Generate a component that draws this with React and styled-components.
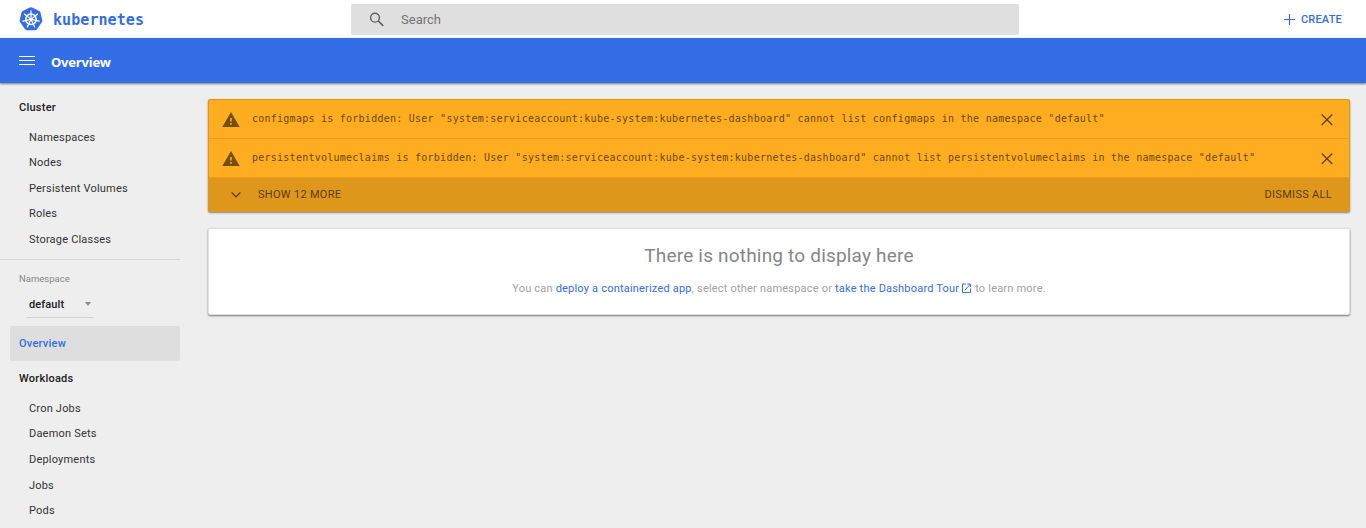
import React from "react";
import styled, { createGlobalStyle } from "styled-components";

const Global = createGlobalStyle`
  * { box-sizing: border-box; }
  body { margin: 0; background: #eee; font-family: Roboto, sans-serif; overflow: hidden; }
`;

const Page = styled.div`
  height: 528px;
  overflow: hidden;
  display: flex;
  flex-direction: column;
`;

const TopBar = styled.header`
  height: 38px;
  flex: none;
  display: flex;
  align-items: center;
  background: #fff;
`;

const Brand = styled.div`
  width: 351px;
  padding-left: 19px;
  display: flex;
  align-items: center;
  color: #326de6;
`;

const BrandName = styled.span`
  margin: 1px 0 0 10px;
  font: 700 15px/20px "DejaVu Sans Mono", monospace;
  letter-spacing: 0.07px;
`;

const SearchBox = styled.div`
  width: 668px;
  height: 31px;
  margin-top: 1px;
  padding-left: 18px;
  display: flex;
  align-items: center;
  gap: 16px;
  background: #dfdfdf;
  border-radius: 2px;
  color: #757575;
  font-size: 13px;
  letter-spacing: 0.02px;
`;

const CreateButton = styled.div`
  margin-left: auto;
  padding-right: 24px;
  display: flex;
  align-items: center;
  gap: 6px;
  color: #326de6;
  font-size: 11px;
  font-weight: 500;
  letter-spacing: 0.2px;
`;

const ActionBar = styled.div`
  height: 45px;
  flex: none;
  padding: 3px 0 0 19px;
  display: flex;
  align-items: center;
  gap: 16px;
  position: relative;
  background: #326de6;
  box-shadow: 0 1px 2px rgba(0, 0, 0, 0.5);
`;

const PageTitle = styled.h1`
  margin: 0;
  color: #fff;
  font: 700 13px/20px "Noto Sans", sans-serif;
  letter-spacing: -0.2px;
`;

const Body = styled.div`
  flex: 1;
  display: flex;
  min-height: 0;
`;

const Sidebar = styled.nav`
  width: 208px;
  padding-top: 7px;
  flex: none;
  color: #333;
  font-size: 11px;
`;

const NavHeading = styled.div`
  height: 35px;
  width: 170px;
  margin-left: 10px;
  padding-left: 9px;
  line-height: 35px;
  font-weight: 500;
  letter-spacing: 0.25px;
  border-radius: 2px;
  color: ${(p) => (p.$active ? "#326de6" : "#212121")};
  background: ${(p) => (p.$active ? "#dedede" : "transparent")};
`;

const NavList = styled.div`
  margin-top: -0.2px;
`;

const NavItem = styled.div`
  height: ${(p) => p.$height}px;
  padding-left: 29px;
  line-height: 25.5px;
  letter-spacing: 0.2px;
`;

const Divider = styled.div`
  width: 180px;
  height: 1px;
  margin-top: 6.7px;
  background: #d5d5d5;
`;

const FieldLabel = styled.div`
  padding: 13px 0 0 19px;
  font-size: 9.5px;
  line-height: 12px;
  color: #888;
`;

const NamespaceSelect = styled.div`
  width: 66px;
  height: 27px;
  margin: 6px 0 8px 27px;
  padding: 0 2px;
  display: flex;
  align-items: center;
  justify-content: space-between;
  border-bottom: 1px solid #d2d2d2;
  color: #212121;
  font-weight: 500;
  letter-spacing: 0.1px;
`;

const Caret = styled.i`
  border: 3.5px solid transparent;
  border-top: 4px solid #8b8b8b;
  border-bottom: 0;
`;

const Main = styled.main`
  flex: 1;
  padding: 16px 16px 0 0;
`;

const Alerts = styled.section`
  height: 113px;
  border: 1px solid #df971b;
  border-radius: 2px;
  background: #ffad20;
  box-shadow: 0 1px 2px rgba(0, 0, 0, 0.45);
  color: #6a480d;
`;

const AlertRow = styled.div`
  height: 39px;
  padding: 1px 16px 0 13px;
  display: flex;
  align-items: center;
  border-bottom: 1px solid #e99d1c;
`;

const AlertText = styled.span`
  flex: 1;
  margin: 0 0 2px 12px;
  font: 10px/16px "DejaVu Sans Mono", monospace;
  letter-spacing: 0.25px;
  white-space: pre;
`;

const AlertFooter = styled.div`
  height: 33px;
  padding: 0 17px 0 22px;
  display: flex;
  align-items: center;
  background: #df971b;
  color: #593c0b;
  font-size: 11px;
  letter-spacing: 0.3px;
`;

const FooterAction = styled.span`
  margin-left: ${(p) => (p.$end ? "auto" : "17px")};
`;

const EmptyCard = styled.section`
  height: 87px;
  margin-top: 16px;
  padding-top: 14px;
  border: 1px solid #e0e0e0;
  border-radius: 2px;
  background: #fff;
  text-align: center;
  box-shadow: 0 1px 2px rgba(0, 0, 0, 0.5);
`;

const EmptyTitle = styled.h2`
  margin: 0;
  color: #868686;
  font-size: 19px;
  font-weight: 400;
  line-height: 25px;
  letter-spacing: 0.19px;
`;

const EmptyText = styled.p`
  margin: 13px 0 0;
  color: #a1a1a1;
  font-size: 11px;
  line-height: 16px;
  letter-spacing: 0.2px;
`;

const Link = styled.a`
  color: #326de6;
  svg { vertical-align: -1px; margin: 0 1px 0 3px; }
`;

const Logo = () => (
  <svg width="24" height="24" viewBox="0 0 24 24" fill="none">
    <path d="M12 .3Q12.6.3 13.2.6L20.3 4Q21.3 4.5 21.5 5.5L23.3 13.4Q23.5 14.4 22.8 15.2L17.8 22.4Q17.1 23.2 16 23.2H8Q6.9 23.2 6.2 22.4L1.2 15.2Q.5 14.4.7 13.4L2.5 5.5Q2.7 4.5 3.7 4L10.8.6Q11.4.3 12 .3Z" fill="#326de6" />
    <circle cx="12" cy="12.3" r="5.2" stroke="#fff" strokeWidth="1.5" />
    {[0, 1, 2, 3, 4, 5, 6].map((n) => (
      <g key={n} transform={`rotate(${(n * 360) / 7} 12 12.3)`}>
        <path d="M12 11V3.9" stroke="#fff" strokeWidth="1.25" strokeLinecap="round" />
      </g>
    ))}
    <circle cx="12" cy="12.3" r="1.4" fill="#fff" />
  </svg>
);

const SearchIcon = () => (
  <svg width="16" height="16" viewBox="0 0 16 16" fill="none" stroke="#616161" strokeWidth="1.4">
    <circle cx="6" cy="5.7" r="4.4" />
    <path d="M9.3 9 14.2 13.9" strokeWidth="1.7" />
  </svg>
);

const PlusIcon = () => (
  <svg width="11" height="11" viewBox="0 0 11 11" stroke="#326de6" strokeWidth="1.2">
    <path d="M5.5 0V11M0 5.5H11" />
  </svg>
);

const MenuIcon = () => (
  <svg width="16" height="12" viewBox="0 0 16 12" fill="#fff">
    <path d="M0 0H16V1H0ZM0 4H16V5H0ZM0 8H16V9H0Z" />
  </svg>
);

const WarningIcon = () => (
  <svg width="18" height="16" viewBox="0 0 18 16">
    <path d="M9 0 17.7 15H.3ZM8.2 6V9.5H9.8V6ZM8.2 11V12.7H9.8V11Z" fill="#74500f" fillRule="evenodd" />
  </svg>
);

const CloseIcon = () => (
  <svg width="12" height="12" viewBox="0 0 12 12" stroke="#62430c" strokeWidth="1.35">
    <path d="M.7.5 11.3 11.1M11.3.5.7 11.1" />
  </svg>
);

const ChevronIcon = () => (
  <svg width="10" height="10" viewBox="0 0 10 10" fill="none" stroke="#593c0b" strokeWidth="1.3">
    <path d="M.6 2.5 5 6.9 9.4 2.5" />
  </svg>
);

const ExternalIcon = () => (
  <svg width="9" height="10" viewBox="0 0 9 10" fill="none" stroke="#326de6">
    <path d="M4 1H.5V9.5H8.5V5.5M5.3 1H8.5V4.2M8.5 1 2.8 7.2" />
  </svg>
);

const clusterItems = ["Namespaces", "Nodes", "Persistent Volumes", "Roles", "Storage Classes"];
const workloadItems = ["Cron Jobs", "Daemon Sets", "Deployments", "Jobs", "Pods"];
const alerts = ["configmaps", "persistentvolumeclaims"];

export default function App() {
  return (
    <Page>
      <Global />
      <TopBar>
        <Brand><Logo /><BrandName>kubernetes</BrandName></Brand>
        <SearchBox><SearchIcon /><span>Search</span></SearchBox>
        <CreateButton><PlusIcon /><span>CREATE</span></CreateButton>
      </TopBar>
      <ActionBar><MenuIcon /><PageTitle>Overview</PageTitle></ActionBar>
      <Body>
        <Sidebar>
          <NavHeading>Cluster</NavHeading>
          <NavList>
            {clusterItems.map((t) => <NavItem key={t} $height={25.5}>{t}</NavItem>)}
          </NavList>
          <Divider />
          <FieldLabel>Namespace</FieldLabel>
          <NamespaceSelect>default<Caret /></NamespaceSelect>
          <NavHeading $active>Overview</NavHeading>
          <NavHeading>Workloads</NavHeading>
          <NavList>
            {workloadItems.map((t) => <NavItem key={t} $height={25.6}>{t}</NavItem>)}
          </NavList>
        </Sidebar>
        <Main>
          <Alerts>
            {alerts.map((name) => (
              <AlertRow key={name}>
                <WarningIcon />
                <AlertText>{`${name} is forbidden: User "system:serviceaccount:kube-system:kubernetes-dashboard" cannot list ${name} in the namespace "default"`}</AlertText>
                <CloseIcon />
              </AlertRow>
            ))}
            <AlertFooter>
              <ChevronIcon />
              <FooterAction>SHOW 12 MORE</FooterAction>
              <FooterAction $end>DISMISS ALL</FooterAction>
            </AlertFooter>
          </Alerts>
          <EmptyCard>
            <EmptyTitle>There is nothing to display here</EmptyTitle>
            <EmptyText>
              You can <Link>deploy a containerized app</Link>, select other namespace or{" "}
              <Link>take the Dashboard Tour<ExternalIcon /></Link> to learn more.
            </EmptyText>
          </EmptyCard>
        </Main>
      </Body>
    </Page>
  );
}
